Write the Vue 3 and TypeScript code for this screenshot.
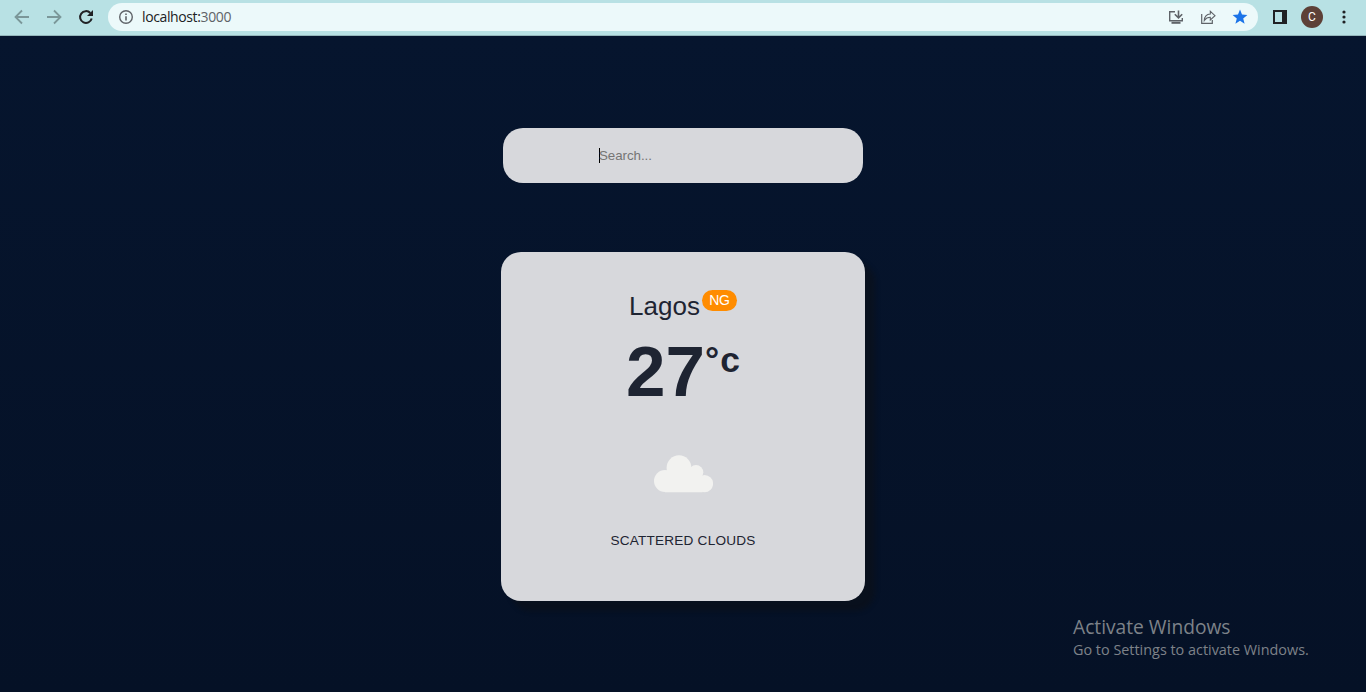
<script setup lang="ts">
import { ref } from 'vue'

interface Weather {
  city: string
  country: string
  temp: number
  description: string
}

const weather = ref<Weather>({
  city: 'Lagos',
  country: 'NG',
  temp: 27,
  description: 'SCATTERED CLOUDS',
})
</script>

<template>
  <div class="window">
    <header class="toolbar">
      <svg class="nav" width="108" height="35" viewBox="0 0 108 35" fill="none">
        <g stroke="#7b9799" stroke-width="1.8">
          <path d="M29 17H16M22 10.5L15.5 17L22 23.5" />
          <path d="M47 17H60M54 10.5L60.500 17L54 23.500" />
        </g>
        <path d="M90.300 13A5.900 5.900 0 1 0 91.700 18.500" stroke="#202124" stroke-width="2" />
        <path d="M93 10V16H87Z" fill="#202124" />
      </svg>
      <div class="address">
        <svg class="info" width="16" height="16" viewBox="0 0 16 16">
          <circle cx="8" cy="8" r="6.300" fill="none" stroke="#5f6368" stroke-width="1.400" />
          <path d="M7.200 7.200h1.600v4.200H7.200zM7.200 4.500h1.600v1.600H7.200z" fill="#5f6368" />
        </svg>
        <span class="url">localhost:<span class="port">3000</span></span>
        <svg class="actions" width="90" height="28" viewBox="1168 3 90 28" fill="none">
          <g stroke="#5f6368" stroke-width="1.400">
            <path d="M1175 11.700H1169.700V20.800H1182.300V18" />
            <path d="M1178.500 10.500V17.500M1174.800 14.200L1178.500 17.900L1182.200 14.200" stroke-width="1.600" />
            <path d="M1171.500 22.800H1180.500" stroke-width="2" />
            <path d="M1201.700 14V23.300H1212.300V20" stroke-width="1.200" />
            <path d="M1204.300 20.500C1204.500 16 1206.500 14.200 1210.300 14V11.300L1215 15.700L1210.300 20V17.300C1207.500 17.300 1205.800 18.300 1204.300 20.500Z" stroke-width="1.100" />
          </g>
          <path d="M1240 9.500L1242 14.600L1247.400 14.900L1243.200 18.400L1244.600 23.700L1240 20.700L1235.400 23.700L1236.800 18.400L1232.600 14.900L1238 14.600Z" fill="#1a73e8" />
        </svg>
      </div>
      <svg class="panel" width="14" height="14" viewBox="0 0 14 14">
        <path d="M0 0H14V14H0ZM2 2V12H9V2Z" fill="#202124" fill-rule="evenodd" />
      </svg>
      <span class="avatar">C</span>
      <svg class="more" width="4" height="14" viewBox="0 0 4 14" fill="#202124">
        <circle cx="2" cy="2" r="1.600" /><circle cx="2" cy="7" r="1.600" /><circle cx="2" cy="12" r="1.600" />
      </svg>
    </header>

    <main class="page">
      <div class="search"><span class="caret"></span><span class="placeholder">Search...</span></div>
      <section class="card">
        <div class="city">
          <span class="name">{{ weather.city }}</span><span class="country">{{ weather.country }}</span>
        </div>
        <div class="temp">
          <span class="value">{{ weather.temp }}</span><span class="degree">°</span><span class="unit">c</span>
        </div>
        <svg class="cloud" width="60" height="38" viewBox="-0.5 0 60 38" fill="#f2f2f0">
          <circle cx="11.500" cy="26" r="11" />
          <circle cx="25.500" cy="12.700" r="12.400" />
          <circle cx="42.500" cy="17.300" r="7.300" />
          <circle cx="51" cy="28.600" r="8.600" />
          <path d="M11.500 37V18L20 12H42L49 24V37.200H11.500Z" />
        </svg>
        <p class="description">{{ weather.description }}</p>
      </section>
      <aside class="activate">
        <div class="activate-title">Activate Windows</div>
        <div class="activate-text">Go to Settings to activate Windows.</div>
      </aside>
    </main>
  </div>
</template>

<style>
body {
  margin: 0;
  overflow: hidden;
}
</style>

<style scoped>
.window {
  display: flex;
  flex-direction: column;
  width: 1366px;
  height: 692px;
  overflow: hidden;
  font-family: "Liberation Sans", Arial, sans-serif;
}
.toolbar {
  display: flex;
  align-items: center;
  box-sizing: border-box;
  height: 36px;
  padding-bottom: 1px;
  background: #b8e1e4;
  border-bottom: 1px solid #94b6bb;
}
.nav {
  flex: none;
}
.address {
  display: flex;
  align-items: center;
  width: 1150px;
  height: 28px;
  box-sizing: border-box;
  padding-left: 10px;
  border-radius: 14px;
  background: #ecf9fa;
}
.url {
  margin-left: 8px;
  font: 14px/20px "Open Sans", "Noto Sans", sans-serif;
  letter-spacing: -0.380px;
  color: #202124;
}
.port {
  color: #5f6368;
}
.actions {
  margin-left: auto;
}
.panel {
  margin-left: 15px;
}
.avatar {
  width: 22px;
  height: 22px;
  margin-left: 14px;
  border-radius: 50%;
  background: #5d4037;
  color: #fff;
  font: 12px/22px Roboto, sans-serif;
  text-align: center;
}
.more {
  margin-left: 19px;
}
.page {
  position: relative;
  flex: 1;
  display: flex;
  flex-direction: column;
  align-items: center;
  background: linear-gradient(#06152e, #051126);
}
.search {
  display: flex;
  align-items: center;
  box-sizing: border-box;
  width: 360px;
  height: 55px;
  margin-top: 92px;
  padding-left: 96px;
  border-radius: 20px;
  background: #d7d8dc;
}
.caret {
  width: 1px;
  height: 15px;
  margin-right: -1px;
  background: #000;
}
.placeholder {
  font-size: 13.333px;
  line-height: 15px;
  letter-spacing: -0.050px;
  color: #757575;
}
.card {
  display: flex;
  flex-direction: column;
  align-items: center;
  width: 364px;
  height: 349px;
  margin-top: 69px;
  border-radius: 20px;
  background: #d7d8dc;
  box-shadow: 10px 10px 5px 0 rgba(15, 15, 15, 0.404);
  color: #1e2432;
}
.city {
  display: flex;
  height: 32px;
  margin-top: 38px;
}
.name {
  font-size: 26px;
  line-height: 32px;
}
.country {
  width: 35px;
  height: 21px;
  margin-left: 2px;
  border-radius: 11px;
  background: #ff8c00;
  color: #fff;
  font-size: 14px;
  line-height: 21px;
  letter-spacing: -0.400px;
  text-align: center;
}
.temp {
  display: flex;
  height: 80px;
  margin-top: 10px;
  font-weight: 700;
}
.value {
  font-size: 71px;
  line-height: 80px;
}
.degree,
.unit {
  font-size: 35.500px;
  line-height: 56px;
}
.unit {
  margin-left: 1px;
}
.cloud {
  margin-top: 43px;
}
.description {
  margin: 40px 0 0;
  font-size: 13.600px;
  line-height: 16px;
  letter-spacing: 0.200px;
}
.activate {
  position: absolute;
  left: 1073px;
  top: 578px;
  font-family: "Open Sans", "Noto Sans", sans-serif;
  white-space: nowrap;
  color: #7d8289;
}
.activate-title {
  font-size: 19.200px;
  line-height: 25px;
}
.activate-text {
  font-size: 14.400px;
  line-height: 21px;
}
</style>
